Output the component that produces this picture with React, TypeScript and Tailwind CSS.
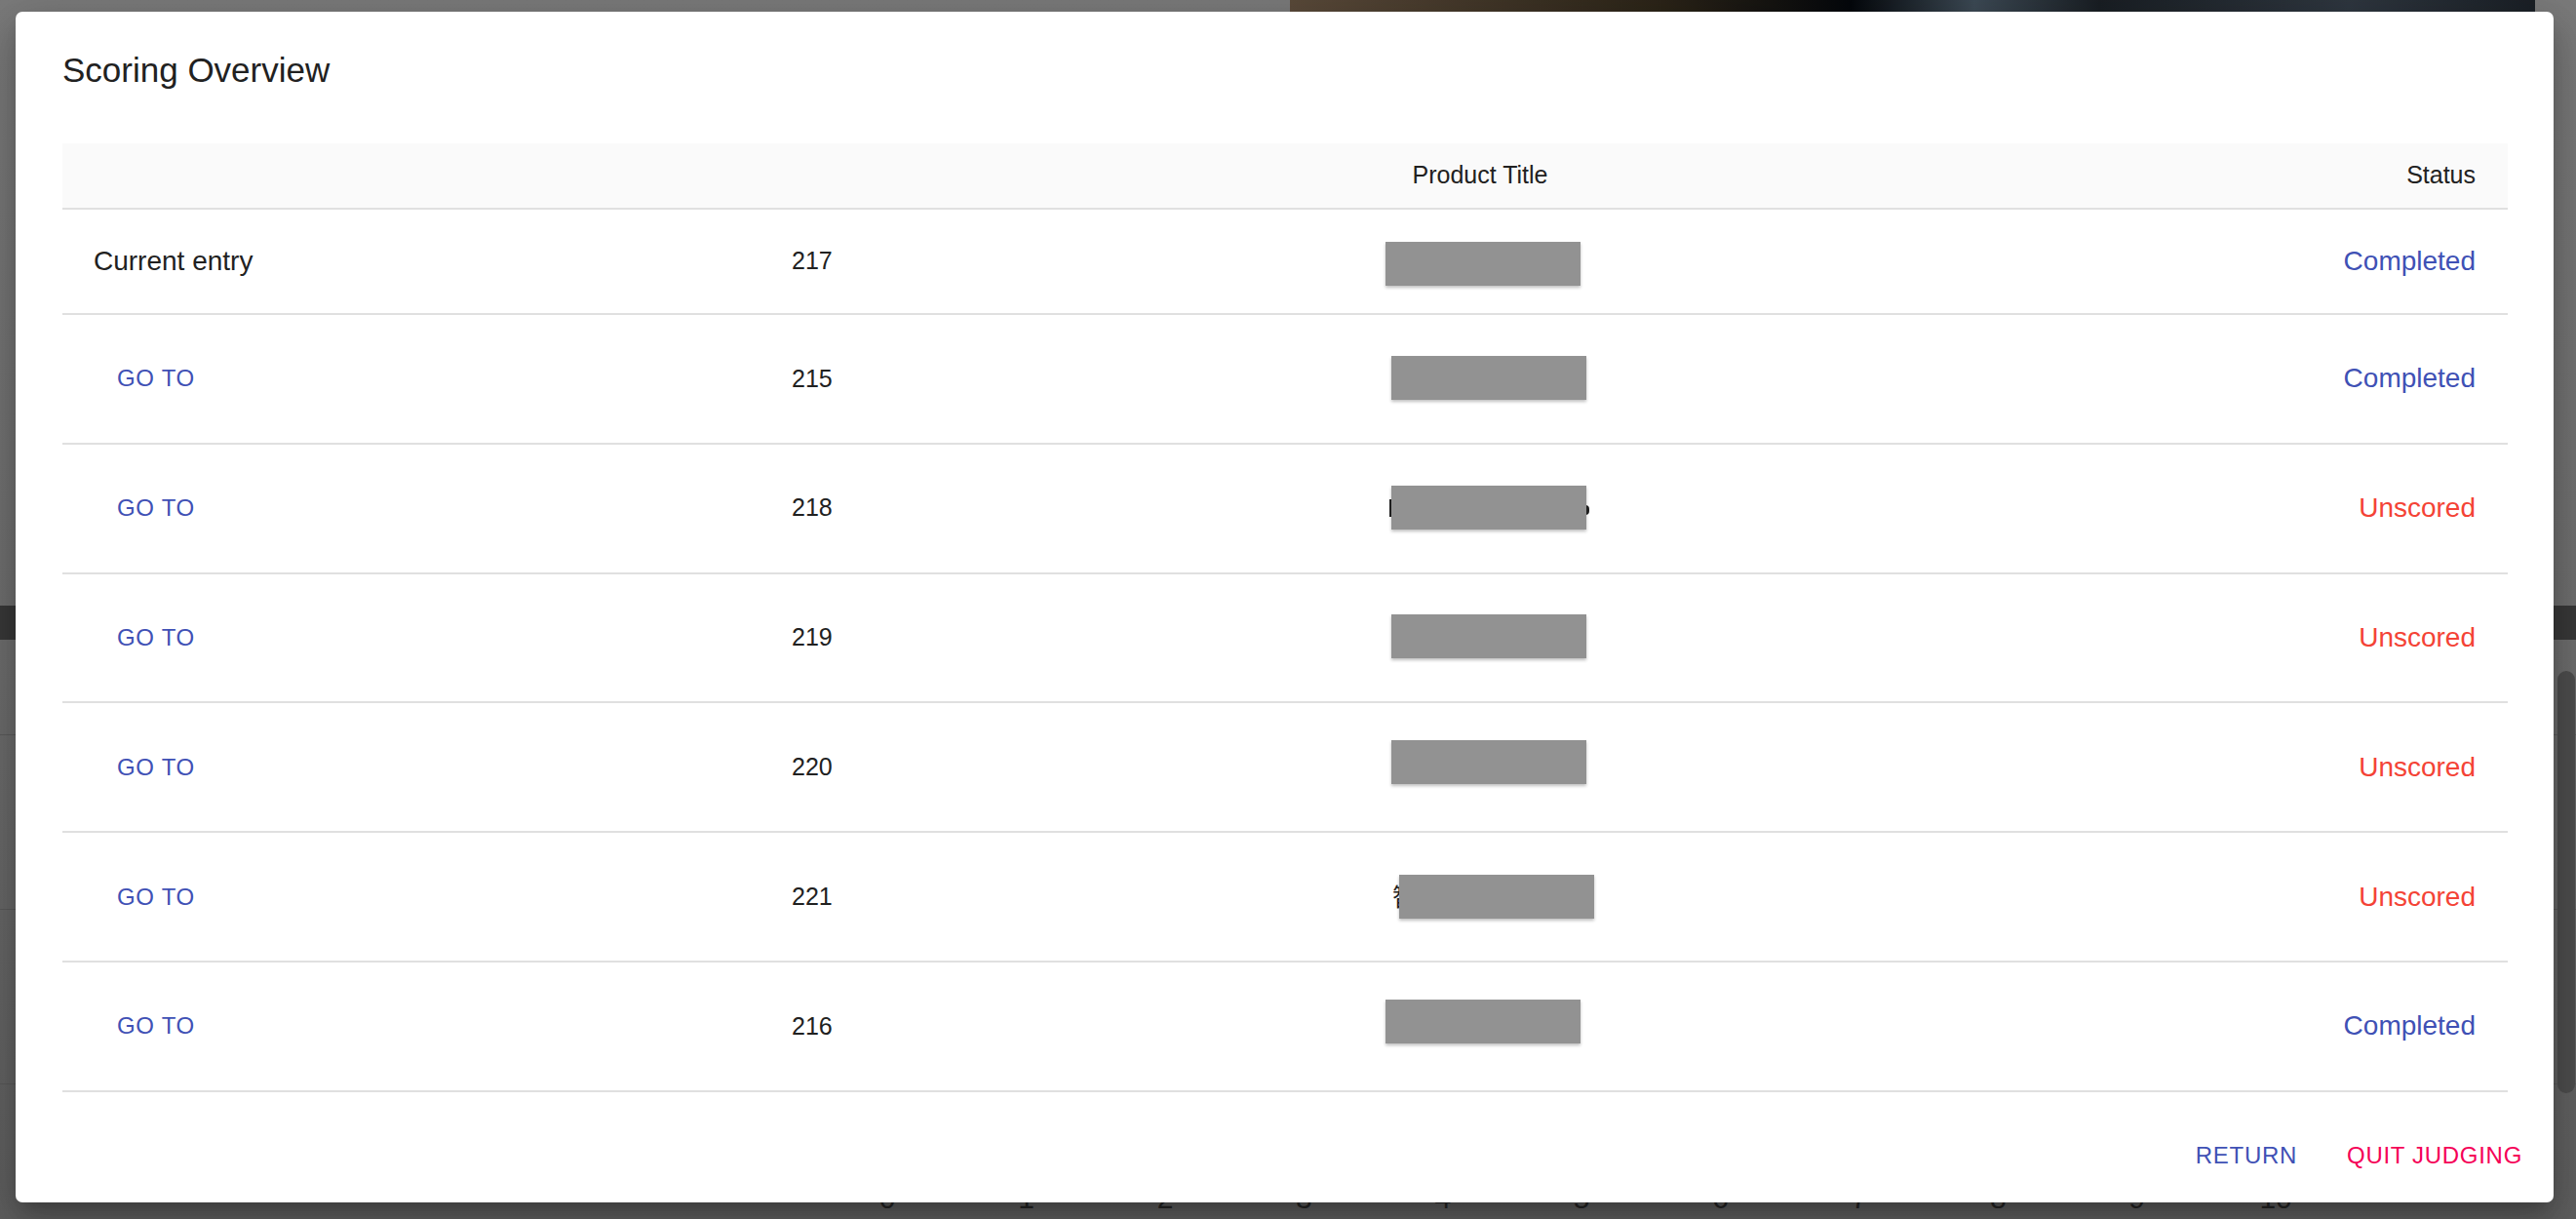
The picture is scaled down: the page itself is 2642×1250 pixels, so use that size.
import React from 'react';

type Row = {
  kind: 'current' | 'goto';
  num: string;
  status: 'Completed' | 'Unscored';
  boxPos: string;
  peek?: 'edges' | 'cjk';
};

const rows: Row[] = [
  { kind: 'current', num: '217', status: 'Completed', boxPos: 'left-[3px] top-[2px]' },
  { kind: 'goto', num: '215', status: 'Completed', boxPos: 'left-[9px] -top-[1px]' },
  { kind: 'goto', num: '218', status: 'Unscored', boxPos: 'left-[9px] -top-[1px]', peek: 'edges' },
  { kind: 'goto', num: '219', status: 'Unscored', boxPos: 'left-[9px] -top-[1px]' },
  { kind: 'goto', num: '220', status: 'Unscored', boxPos: 'left-[9px] -top-[5px]' },
  { kind: 'goto', num: '221', status: 'Unscored', boxPos: 'left-[17px] top-[0px]', peek: 'cjk' },
  { kind: 'goto', num: '216', status: 'Completed', boxPos: 'left-[3px] -top-[5px]' },
];

const sliderLabels = ['0', '1', '2', '3', '4', '5', '6', '7', '8', '9', '10'];

function Redacted({ row }: { row: Row }) {
  return (
    <div className={`relative w-[200px] h-[45px] ${row.boxPos}`}>
      {row.peek === 'edges' && (
        <>
          <span className="absolute -left-[2px] top-[14px] w-[2px] h-[18px] bg-[#222]" />
          <span className="absolute -right-[3px] top-[20px] w-[4px] h-[10px] rounded-r-full bg-[#222]" />
        </>
      )}
      {row.peek === 'cjk' && (
        <span className="absolute -left-[7px] top-[6px] text-[25px] leading-[30px] text-[#222] font-['Noto_Sans_CJK_SC',sans-serif]">
          智
        </span>
      )}
      <div className="absolute inset-0 bg-[#929292] shadow-[0_2px_3px_rgba(0,0,0,0.25)]" />
    </div>
  );
}

export default function App() {
  return (
    <div className="relative w-[2642px] h-[1250px] overflow-hidden bg-[linear-gradient(180deg,#7a7a7a_0%,#6e6e6e_50%,#5e5e5e_100%)] font-['Liberation_Sans',Arial,sans-serif]">
      {/* dimmed page behind the dialog */}
      <div className="flex h-[621px]">
        <div className="w-[1323px]" />
        <div className="w-[1277px] h-[300px] bg-[linear-gradient(90deg,#5a4a3a_0%,#2b2418_30%,#05080c_45%,#3d4a55_55%,#1a1f24_65%,#2f3740_85%,#1b2026_100%)]" />
      </div>
      <div className="h-[35px] bg-[#383838]" />
      <div className="h-[98px] border-b border-[#5a5a5a]" />
      <div className="h-[179px] border-b border-[#595959]" />
      <div className="h-[179px] border-b border-[#585858]" />
      <div className="relative h-[138px]">
        <span className="absolute left-[766px] top-[112px] w-[3px] h-[6px] bg-[#2a2a2a]" />
        <div className="flex pl-[839px] pt-[100px]">
          {sliderLabels.map((l) => (
            <div key={l} className="w-[142.4px] text-center text-[30px] leading-[34px] text-[#262626]">
              {l}
            </div>
          ))}
        </div>
      </div>

      {/* scrollbar thumb */}
      <div className="absolute right-[1px] top-[688px] w-[18px] h-[433px] rounded-full bg-[#4d4d4d]" />

      {/* dialog */}
      <div className="absolute left-[16px] top-[12px] w-[2603px] h-[1221px] bg-white rounded-[7px] shadow-[0_11px_15px_-7px_rgba(0,0,0,0.2),0_24px_38px_3px_rgba(0,0,0,0.14),0_9px_46px_8px_rgba(0,0,0,0.12)] flex flex-col">
        <div className="px-[48px]">
          <h2 className="mt-[33px] text-[35px] leading-[54px] font-normal text-[#212121]">Scoring Overview</h2>

          <table className="mt-[48px] w-full table-fixed border-collapse">
            <colgroup>
              <col className="w-[720px]" />
              <col className="w-[416px]" />
              <col className="w-[636px]" />
              <col className="w-[736px]" />
            </colgroup>
            <thead>
              <tr className="h-[67px] bg-[#fafafa] border-b-2 border-[#e0e0e0]">
                <th />
                <th />
                <th className="text-center text-[25px] font-normal text-[#212121]">Product Title</th>
                <th className="text-right pr-[33px] text-[25px] font-normal text-[#212121]">Status</th>
              </tr>
            </thead>
            <tbody>
              {rows.map((row) => (
                <tr
                  key={row.num}
                  className={`border-b-2 border-[#e0e0e0] ${row.kind === 'current' ? 'h-[108px]' : 'h-[132.8px]'}`}
                >
                  <td className={row.kind === 'current' ? 'pl-[32px]' : 'pl-[42px]'}>
                    {row.kind === 'current' ? (
                      <span className="text-[28px] text-[#212121]">Current entry</span>
                    ) : (
                      <button className="h-[64px] px-[14px] text-[24px] tracking-[0.7px] uppercase text-[#3f51b5]">
                        Go to
                      </button>
                    )}
                  </td>
                  <td className="pl-[28px] text-[25px] text-[#212121]">{row.num}</td>
                  <td>
                    <div className="flex justify-center">
                      <Redacted row={row} />
                    </div>
                  </td>
                  <td
                    className={`text-right pr-[33px] text-[28px] ${
                      row.status === 'Completed' ? 'text-[#3f51b5]' : 'text-[#f44336]'
                    }`}
                  >
                    {row.status}
                  </td>
                </tr>
              ))}
            </tbody>
          </table>
        </div>

        <div className="mt-[33px] flex justify-end gap-[23px] pr-[18px]">
          <button className="h-[64px] px-[14px] text-[24px] tracking-[0.7px] uppercase text-[#3f51b5]">Return</button>
          <button className="h-[64px] px-[14px] text-[24px] tracking-[0.7px] uppercase text-[#f50057]">Quit judging</button>
        </div>
      </div>
    </div>
  );
}
